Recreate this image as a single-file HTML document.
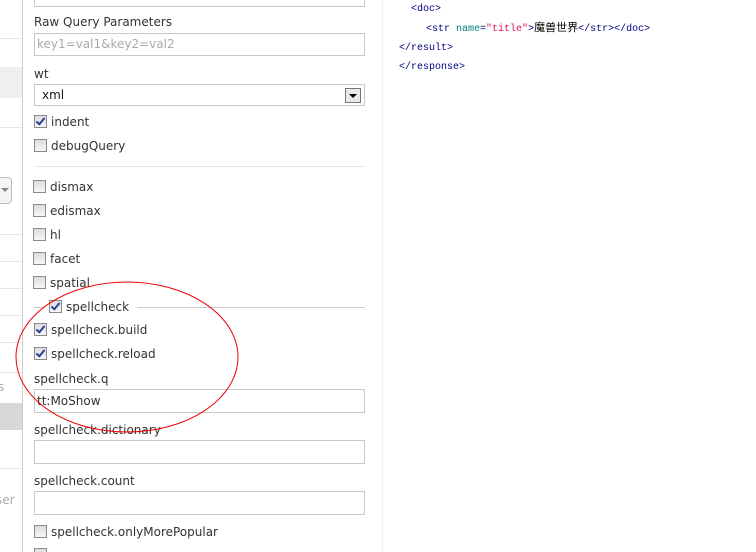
<!DOCTYPE html>
<html><head><meta charset="utf-8"><style>
html,body{margin:0;width:756px;height:552px;overflow:hidden}
body{background:#fff;font-family:"DejaVu Sans",sans-serif;font-size:12px;color:#333;position:relative}
.a{position:absolute}
.hl{position:absolute;left:0;width:22px;height:1px;background:#e6e6e6}
.inp{position:absolute;left:34px;height:23px;border:1px solid #c8c8c8;background:#fff;box-sizing:border-box;width:331px}
.lbl{position:absolute;left:34px;color:#333}
.cb{position:absolute;width:11px;height:11px;border:1px solid #8a8a8a;background:linear-gradient(#ddd,#f6f6f6)}
.cb.on::after{content:"";position:absolute;left:3px;top:0px;width:3px;height:7px;border:solid #2a3f9a;border-width:0 2px 2px 0;transform:rotate(40deg)}
.ct{position:absolute;left:51px}
.code{position:absolute;font-family:"Liberation Mono","Noto Sans CJK SC",monospace;font-size:10px;line-height:13px;color:#000080;white-space:pre}
</style></head><body>
<div class="a" style="left:22px;top:0;width:1px;height:552px;background:#ccc"></div>
<div class="hl" style="top:38px"></div>
<div class="a" style="left:0;top:67px;width:22px;height:31px;background:#efefef"></div>
<div class="hl" style="top:127px"></div>
<div class="a" style="left:-10px;top:177px;width:20px;height:25px;border:1px solid #bbb;border-radius:4px;background:#f4f4f4"></div>
<div class="a" style="left:1px;top:188px;width:0;height:0;border-left:4px solid transparent;border-right:4px solid transparent;border-top:4px solid #888"></div>
<div class="hl" style="top:234px"></div>
<div class="hl" style="top:261px"></div>
<div class="hl" style="top:288px"></div>
<div class="hl" style="top:315px"></div>
<div class="hl" style="top:342px"></div>
<div class="hl" style="top:372px"></div>
<div class="a" style="left:-2px;top:380px;color:#aaa">s</div>
<div class="a" style="left:0;top:403px;width:22px;height:27px;background:#d8d8d8"></div>
<div class="hl" style="top:468px"></div>
<div class="a" style="left:-4px;top:493px;color:#aaa">ser</div>

<div class="inp" style="top:-5px;height:12px"></div>
<div class="lbl" style="top:15px">Raw Query Parameters</div>
<div class="inp" style="top:33px"><span style="position:absolute;left:2px;top:3px;color:#aaa">key1=val1&amp;key2=val2</span></div>
<div class="lbl" style="top:67px">wt</div>
<div class="inp" style="top:84px;height:22px"><span style="position:absolute;left:7px;top:3px;color:#111">xml</span>
<div class="a" style="right:3px;top:3px;width:14px;height:13px;border:1px solid #777;background:#e8e8e8"><div class="a" style="left:3px;top:5px;border-left:4px solid transparent;border-right:4px solid transparent;border-top:4px solid #000"></div></div></div>
<div class="cb on" style="left:34px;top:115px"></div><div class="ct" style="top:115px">indent</div>
<div class="cb" style="left:34px;top:139px"></div><div class="ct" style="top:139px">debugQuery</div>
<div class="a" style="left:34px;top:166px;width:331px;height:1px;background:#e6e6e6"></div>
<div class="cb" style="left:33px;top:180px"></div><div class="ct" style="left:50px;top:180px">dismax</div>
<div class="cb" style="left:33px;top:204px"></div><div class="ct" style="left:50px;top:204px">edismax</div>
<div class="cb" style="left:33px;top:228px"></div><div class="ct" style="left:50px;top:228px">hl</div>
<div class="cb" style="left:33px;top:252px"></div><div class="ct" style="left:50px;top:252px">facet</div>
<div class="cb" style="left:33px;top:276px"></div><div class="ct" style="left:50px;top:276px">spatial</div>
<div class="a" style="left:34px;top:307px;width:331px;height:1px;background:#ccc"></div>
<div class="a" style="left:45px;top:298px;width:92px;height:18px;background:#fff"></div>
<div class="cb on" style="left:49px;top:300px"></div><div class="ct" style="left:66px;top:300px">spellcheck</div>
<div class="cb on" style="left:34px;top:323px"></div><div class="ct" style="top:323px">spellcheck.build</div>
<div class="cb on" style="left:34px;top:347px"></div><div class="ct" style="top:347px">spellcheck.reload</div>
<div class="lbl" style="top:372px">spellcheck.q</div>
<div class="inp" style="top:389px;height:24px"><span style="position:absolute;left:2px;top:4px;color:#333">tt:MoShow</span></div>
<div class="lbl" style="top:423px">spellcheck.dictionary</div>
<div class="inp" style="top:440px;height:24px"></div>
<div class="lbl" style="top:474px">spellcheck.count</div>
<div class="inp" style="top:491px;height:24px"></div>
<div class="cb" style="left:34px;top:525px"></div><div class="ct" style="top:525px">spellcheck.onlyMorePopular</div>
<div class="cb" style="left:34px;top:548px"></div>

<div class="a" style="left:382px;top:0;width:1px;height:552px;background:#eee"></div>
<div class="code" style="left:411px;top:3px">&lt;doc&gt;</div>
<div class="code" style="left:426px;top:23px">&lt;str <span style="color:#008080">name</span>=<span style="color:#e0105a">"title"</span>&gt;<span style="color:#000;font-size:11px">魔兽世界</span>&lt;/str&gt;&lt;/doc&gt;</div>
<div class="code" style="left:399px;top:42px">&lt;/result&gt;</div>
<div class="code" style="left:399px;top:61px">&lt;/response&gt;</div>

<svg class="a" style="left:0;top:0" width="756" height="552"><ellipse cx="127" cy="357" rx="111" ry="75" fill="none" stroke="#e00" stroke-width="1"/></svg>
</body></html>
